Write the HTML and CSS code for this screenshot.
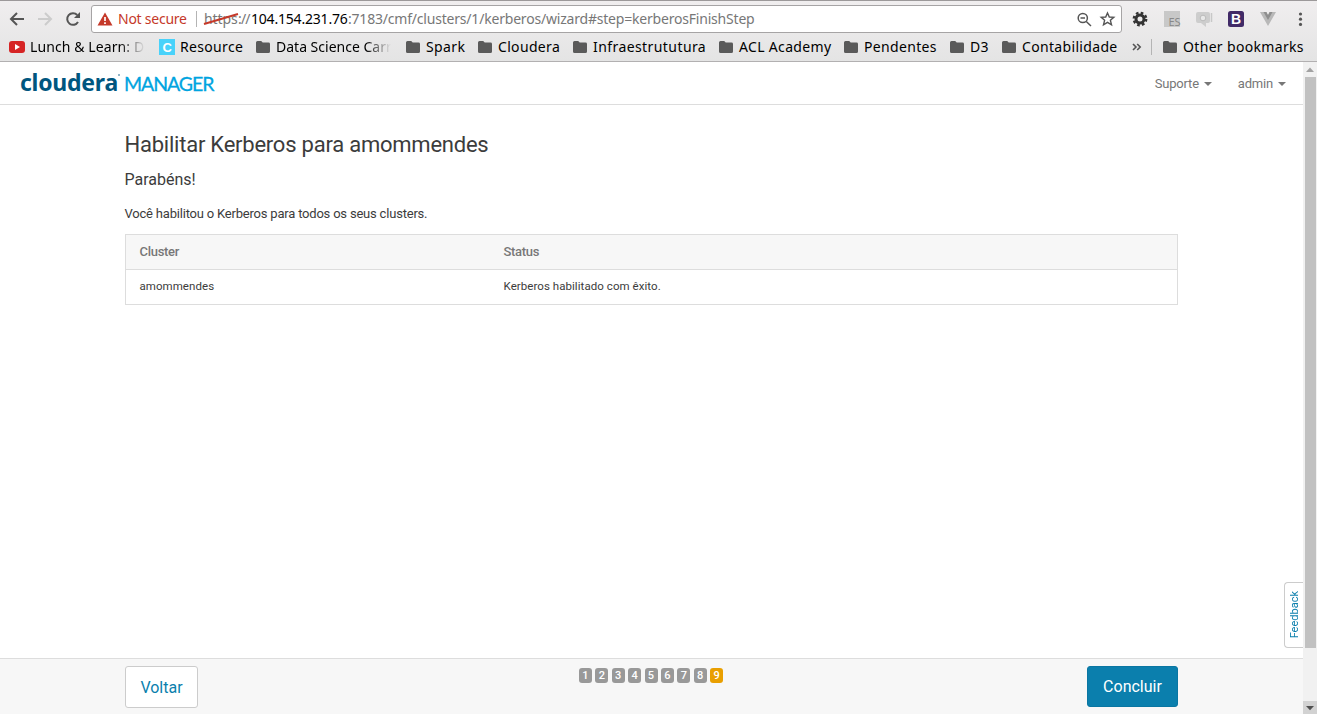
FILE: index.html
```html
<!DOCTYPE html>
<html lang="pt">
<head>
<meta charset="utf-8">
<title>Habilitar Kerberos</title>
<link rel="stylesheet" href="styles.css">
</head>
<body>
<svg class="defs" width="0" height="0"><symbol id="folder" viewBox="0 0 14 12"><path d="M1.5 0H5.2L6.7 1.6H12.5Q14 1.6 14 3V10.5Q14 12 12.5 12H1.5Q0 12 0 10.5V1.5Q0 0 1.5 0Z" fill="#5a5a5a"/></symbol></svg>
<header class="chrome">
  <div class="tabedge"></div>
  <div class="toolbar">
    <svg class="nav" width="91" height="28" viewBox="0 0 91 28" fill="none" stroke="#555" stroke-width="2">
      <path d="M24 14H11.5M17 8L11 14L17 20"/>
      <path d="M38 14H50.5M45 8L51 14L45 20" stroke="#ccc"/>
      <path d="M78 17A5.8 5.8 0 1 1 77.2 10"/><path d="M80 7V13H74Z" fill="#555" stroke="none"/>
    </svg>
    <div class="omnibox">
      <svg class="warn" width="16" height="14" viewBox="0 0 16 14"><path d="M8 0.5L15.5 13.5H0.5Z" fill="#c5392a"/><path d="M8 5V9M8 10.3V12" stroke="#fff" stroke-width="1.7"/></svg>
      <span class="notsecure">Not secure</span>
      <i class="divider"></i>
      <span class="url"><span class="scheme">https<svg class="strike" width="36" height="14" viewBox="0 0 36 14"><path d="M1 12L35 2" stroke="#c5392a" stroke-width="2"/></svg></span><span class="slashes">://</span><b>104.154.231.76</b><span class="path">:7183/cmf/clusters/1/kerberos/wizard#step=kerberosFinishStep</span></span>
      <svg class="boxicons" width="44" height="20" viewBox="0 0 44 20" fill="none" stroke="#555" stroke-width="1.5"><circle cx="8.8" cy="9" r="4.6"/><path d="M6.5 9H11M12.3 12.5L17 17"/><path d="M33.5 4L35.3 8L39.8 8.4L36.4 11.3L37.5 15.8L33.5 13.4L29.5 15.8L30.6 11.3L27.2 8.4L31.7 8Z" stroke-width="1.4"/></svg>
    </div>
    <svg class="extensions" width="195" height="28" viewBox="0 0 195 28">
      <circle cx="18" cy="14" r="4" fill="none" stroke="#333" stroke-width="3"/><circle cx="18" cy="14" r="6.2" fill="none" stroke="#333" stroke-width="2.4" stroke-dasharray="2.6 2.27"/>
      <rect x="42" y="6" width="16" height="16" fill="#c8c8c8"/><text x="46.5" y="21" class="es">ES</text>
      <path d="M76 7H86Q88 7 88 9V16Q88 18 86 18H84V22L79 18H76Q74 18 74 16V9Q74 7 76 7Z" fill="#cdcdcd"/><circle cx="81" cy="13" r="2.8" fill="#e8e8e8" stroke="#bbb"/><path d="M89.5 8V17" stroke="#c8c8c8" stroke-width="1.5"/>
      <rect x="106" y="6" width="16" height="16" rx="2.5" fill="#412a67"/><text x="109" y="19" class="bee">B</text>
      <path d="M138 7H144L146 11L148 7H154L146 21Z" fill="#b8b8b8"/><path d="M141.5 7H144.5L146 10L147.5 7H150.5L146 15Z" fill="#8e8e8e"/>
      <g fill="#555"><circle cx="178.5" cy="9" r="1.6"/><circle cx="178.5" cy="14.2" r="1.6"/><circle cx="178.5" cy="19.4" r="1.6"/></g>
    </svg>
  </div>
  <nav class="bookmarks">
    <span class="bm"><svg width="16" height="12"><rect width="16" height="12" rx="3" fill="#d62424"/><path d="M6 3L11 6L6 9Z" fill="#fff"/></svg><span class="fade lunch">Lunch &amp; Learn: D</span></span>
    <span class="bm"><svg width="16" height="16"><rect width="16" height="16" fill="#49d2fa"/><text x="3.5" y="13" class="see">C</text></svg><span class="resource">Resource</span></span>
    <span class="bm f"><svg width="14" height="12"><use href="#folder"/></svg><span class="fade data">Data Science Carr</span></span>
    <span class="bm f"><svg width="14" height="12"><use href="#folder"/></svg><span class="spark">Spark</span></span>
    <span class="bm f"><svg width="14" height="12"><use href="#folder"/></svg><span class="cloud">Cloudera</span></span>
    <span class="bm f"><svg width="14" height="12"><use href="#folder"/></svg><span class="infra">Infraestrututura</span></span>
    <span class="bm f"><svg width="14" height="12"><use href="#folder"/></svg><span class="acl">ACL Academy</span></span>
    <span class="bm f"><svg width="14" height="12"><use href="#folder"/></svg><span class="pend">Pendentes</span></span>
    <span class="bm f"><svg width="14" height="12"><use href="#folder"/></svg><span>D3</span></span>
    <span class="bm f"><svg width="14" height="12"><use href="#folder"/></svg><span class="cont">Contabilidade</span></span>
    <svg class="more" width="10" height="8" fill="none" stroke="#555" stroke-width="1.6"><path d="M1 1L4 4L1 7M5.2 1L8.2 4L5.2 7"/></svg>
    <i class="divider"></i>
    <span class="bm f"><svg width="14" height="12"><use href="#folder"/></svg><span class="other">Other bookmarks</span></span>
  </nav>
</header>
<div class="viewport">
  <div class="page">
    <div class="topbar">
      <div class="brand"><span class="cloudera">cloudera<i class="mark"></i></span><span class="manager">MANAGER</span></div>
      <div class="menus"><span class="menu">Suporte<i class="caret"></i></span><span class="menu">admin<i class="caret"></i></span></div>
    </div>
    <main class="content">
      <h1>Habilitar Kerberos para amommendes</h1>
      <h2>Parabéns!</h2>
      <p>Você habilitou o Kerberos para todos os seus clusters.</p>
      <div class="table">
        <div class="row head"><span>Cluster</span><span>Status</span></div>
        <div class="row"><span>amommendes</span><span>Kerberos habilitado com êxito.</span></div>
      </div>
    </main>
    <footer class="footer">
      <button class="btn back">Voltar</button>
      <div class="steps"><span>1</span><span>2</span><span>3</span><span>4</span><span>5</span><span>6</span><span>7</span><span>8</span><span class="on">9</span></div>
      <button class="btn finish">Concluir</button>
    </footer>
    <div class="feedback"><span>Feedback</span></div>
  </div>
  <div class="scrollbar">
    <svg width="14" height="15"><path d="M3 10H11L7 5.5Z" fill="#a2a2a2"/></svg>
    <div class="thumb"></div>
    <svg class="down" width="14" height="13"><path d="M3 5H11L7 9.3Z" fill="#505050"/></svg>
  </div>
</div>
</body>
</html>
```
FILE: styles.css
```css
* { box-sizing: border-box; }
body { margin: 0; width: 1317px; height: 714px; overflow: hidden; background: #fff; color: #3c3c3c; font: 13px/20px Roboto, sans-serif; display: flex; flex-direction: column; }
svg { display: block; flex: none; }
.defs { position: absolute; }
.chrome { height: 62px; flex: none; background: linear-gradient(#f0eeef, #e4e4e4); border-top: 1px solid #9c999a; border-bottom: 1px solid #b2b0b1; font-family: "Noto Sans", sans-serif; color: #000; }
.tabedge { height: 4px; }
.toolbar { display: flex; height: 28px; }
.omnibox { width: 1031px; height: 28px; background: #fff; border: 1px solid #a6a4a5; border-radius: 3px; display: flex; align-items: center; padding-left: 5px; font-size: 14px; white-space: nowrap; }
.notsecure { color: #c5392a; width: 78px; margin-left: 5px; letter-spacing: -0.25px; }
.divider { width: 1px; height: 16px; background: #b4b4b4; flex: none; }
.url { margin-left: 7px; width: 860px; display: flex; color: #777; }
.url b { font-weight: 400; color: #000; width: 97px; letter-spacing: -0.2px; }
.scheme { position: relative; width: 34px; letter-spacing: -0.1px; }
.strike { position: absolute; left: -1px; top: 3px; }
.slashes { width: 13px; letter-spacing: -0.8px; }
.path { letter-spacing: -0.2px; }
.boxicons { margin-left: 10px; }
.es { font: 11px "Noto Sans", sans-serif; fill: #888; }
.bee { font: bold 14px "Liberation Sans", sans-serif; fill: #fff; }
.see { font: bold 13px "Liberation Sans", sans-serif; fill: #fff; }
.bookmarks { display: grid; grid-template-columns: 150px 97px 150px 72px 95px 146px 125px 106px 52px 130px 19px 12px 150px; padding-left: 9px; height: 28px; align-items: center; font-size: 14px; }
.bm { display: flex; align-items: center; gap: 5px; white-space: nowrap; letter-spacing: 0.33px; }
.bm.f { gap: 6px; }
.fade { width: 115px; -webkit-mask-image: linear-gradient(90deg, #000 78%, transparent); mask-image: linear-gradient(90deg, #000 78%, transparent); }
.lunch { letter-spacing: 0.1px; }
.data { letter-spacing: 0; }
.spark { letter-spacing: 0.4px; }
.infra { letter-spacing: 0.42px; }
.viewport { flex: 1; display: flex; min-height: 0; }
.page { position: relative; width: 1303px; display: flex; flex-direction: column; }
.topbar { height: 43px; flex: none; border-bottom: 1px solid #ddd; display: flex; justify-content: space-between; align-items: center; padding: 0 17px 0 20px; }
.brand { display: flex; align-items: baseline; line-height: 28px; }
.cloudera { display: flex; font: bold 23px/26px "Noto Sans", sans-serif; color: #00567f; width: 104px; letter-spacing: -0.25px; white-space: nowrap; }
.mark { width: 2px; height: 2px; margin: 5px 0 0 0; background: #6d9db5; border-radius: 1px; }
.manager { font: 19.5px/28px Lato, sans-serif; color: #00a4e0; letter-spacing: -1.05px; -webkit-text-stroke: 0.3px #00a4e0; }
.menus { display: flex; gap: 26px; color: #777; letter-spacing: -0.2px; padding-top: 1px; }
.menu { display: flex; align-items: center; gap: 5px; }
.caret { border: 4px solid transparent; border-top-color: #777; border-bottom: 0; }
.content { flex: 1; padding: 25px 125px 0; }
h1 { margin: 0 0 0 -0.5px; font-size: 22px; line-height: 30px; font-weight: 400; letter-spacing: -0.23px; }
h2 { margin: 10px 0 0 -0.5px; font-size: 16px; line-height: 20px; font-weight: 400; }
p { margin: 14px 0 10px -0.5px; letter-spacing: -0.2px; }
.table { border: 1px solid #ddd; }
.row { height: 34px; display: grid; grid-template-columns: 364px 1fr; align-items: center; padding: 0 0 2px 13.5px; font-size: 11.5px; letter-spacing: 0.06px; }
.row.head { height: 35px; padding-bottom: 0; background: #f7f7f7; border-bottom: 1px solid #ddd; color: #777; font-size: 13px; font-weight: 500; letter-spacing: -0.3px; }
.footer { height: 56px; flex: none; background: #f7f7f7; border-top: 1px solid #ddd; display: flex; justify-content: space-between; align-items: flex-start; padding: 7px 125px; }
.btn { height: 42px; border-radius: 3px; font: 16px Roboto, sans-serif; padding: 0; }
.back { width: 73px; background: #fff; border: 1px solid #ccc; color: #0b7fad; }
.finish { width: 91px; height: 41px; background: #0b7fad; border: 1px solid #0a76a2; color: #fff; }
.steps { display: flex; gap: 3.4px; margin: 2px 0 0 17px; }
.steps span { width: 13px; height: 15px; border-radius: 3px; background: #999; color: #fff; font: 500 11px/15px Roboto, sans-serif; text-align: center; }
.steps .on { background: #e99f00; }
.feedback { position: absolute; right: 0; top: 520px; width: 19px; height: 66px; border: 1px solid #ccc; border-right: 0; border-radius: 4px 0 0 4px; background: #fff; display: flex; align-items: center; justify-content: center; }
.feedback span { writing-mode: vertical-rl; transform: rotate(180deg); color: #0b7fad; font-size: 11px; line-height: 17px; }
.scrollbar { width: 14px; background: #f1f1f1; display: flex; flex-direction: column; }
.thumb { height: 571px; width: 11px; margin-left: 2px; background: #c1c1c1; }
.down { margin-top: auto; background: #d2d2d2; }
```
